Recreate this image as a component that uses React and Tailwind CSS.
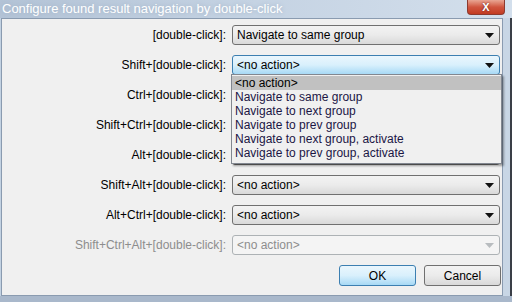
import React from "react";

const rows = [
    { label: "[double-click]:", value: "Navigate to same group" },
    { label: "Shift+[double-click]:", value: "<no action>", focused: true },
    { label: "Ctrl+[double-click]:", value: "<no action>", covered: true },
    { label: "Shift+Ctrl+[double-click]:", value: "<no action>", covered: true },
    { label: "Alt+[double-click]:", value: "<no action>", covered: true },
    { label: "Shift+Alt+[double-click]:", value: "<no action>" },
    { label: "Alt+Ctrl+[double-click]:", value: "<no action>" },
    { label: "Shift+Ctrl+Alt+[double-click]:", value: "<no action>", disabled: true },
];

const options = [
    "<no action>",
    "Navigate to same group",
    "Navigate to next group",
    "Navigate to prev group",
    "Navigate to next group, activate",
    "Navigate to prev group, activate",
];

function Arrow({ disabled }) {
    return (
        <svg width="9" height="5" viewBox="0 0 9 5" className="shrink-0">
            <path d="M0 0 H9 L4.5 5 Z" fill={disabled ? "#b8bcbf" : "#111"} />
        </svg>
    );
}

function Combo({ value, focused, disabled }) {
    let cls = "border-[#707070] bg-gradient-to-b from-[#f3f3f3] via-[#ebebeb] to-[#d9d9d9] text-black";
    if (focused) cls = "border-[#3c7fb1] bg-gradient-to-b from-[#eaf6fd] via-[#d9f0fc] to-[#a7d9f5] text-black";
    if (disabled) cls = "border-[#adb2b5] bg-[#f4f4f4] text-[#8d8d8d]";
    return (
        <div className={`w-[268px] h-[20px] flex items-center justify-between rounded-[3px] border pl-[4px] pr-[5px] ${cls}`}>
            <span>{value}</span>
            <Arrow disabled={disabled} />
        </div>
    );
}

function Button({ children, focused }) {
    const cls = focused
        ? "border-[#3c7fb1] from-[#eaf6fd] via-[#d9f0fc] to-[#a7d9f5]"
        : "border-[#707070] from-[#f3f3f3] via-[#ebebeb] to-[#d9d9d9]";
    return (
        <div className={`w-[77px] h-[21px] flex items-center justify-center rounded-[3px] border bg-gradient-to-b ${cls}`}>
            {children}
        </div>
    );
}

export default function App() {
    return (
        <div
            className="w-[512px] h-[302px] relative overflow-hidden bg-[#c3d2e2] text-[12px] leading-[14px]"
            style={{ fontFamily: '"Liberation Sans", Arial, sans-serif' }}
        >
            {/* title bar */}
            <div className="h-[18px] flex items-start bg-gradient-to-r from-[#b3c3d6] via-[#c5d3e3] to-[#d3dfec]">
                <span className="ml-[2px] mt-[1px] text-[13px] leading-[15px] text-white [text-shadow:0_0_4px_#9fb0c4]">
                    Configure found result navigation by double-click
                </span>
                <div className="ml-auto mr-[7px] w-[38px] h-[15px] flex items-center justify-center rounded-b-[4px] border border-t-0 border-[#8c3a2f] bg-gradient-to-b from-[#e8a593] via-[#d0553f] to-[#c23b22]">
                    <span className="text-white text-[11px] font-bold leading-none [text-shadow:0_0_2px_#5a1a10]">X</span>
                </div>
            </div>

            <div className="flex h-[278px]">
                {/* client area */}
                <div className="ml-[1px] w-[502px] h-[278px] border border-[#8a9bb0] bg-[#f0f0f0] relative">
                    <div className="flex flex-col gap-[10px] pt-[6px]">
                        {rows.map((r) => (
                            <div key={r.label} className="flex items-center">
                                <div className={`w-[224px] text-right ${r.disabled ? "text-[#8d8d8d]" : "text-black"}`}>
                                    {r.label}
                                </div>
                                <div className="ml-[6px]">
                                    {/* combos under the open list show no text */}
                                    <Combo value={r.covered ? "" : r.value} focused={r.focused} disabled={r.disabled} />
                                </div>
                            </div>
                        ))}
                        <div className="flex justify-end gap-[8px] pr-[1px]">
                            <Button focused>OK</Button>
                            <Button>Cancel</Button>
                        </div>
                    </div>

                    {/* open dropdown list */}
                    <div className="absolute left-[229px] top-[55px] w-[271px] h-[90px] border border-[#828790] bg-[#f0f0f0] shadow-[2px_2px_2px_rgba(0,0,0,0.35)] pt-[1px]">
                        {options.map((o, i) => (
                            <div
                                key={o}
                                className={`h-[14px] pl-[3px] ${i === 0 ? "bg-[#c1c1c1] text-black" : "text-[#1b1645]"}`}
                            >
                                {o}
                            </div>
                        ))}
                    </div>
                </div>
                {/* right frame + background window */}
                <div className="flex-1 flex">
                    <div className="flex-1 bg-[#c8d6e5]" />
                    <div className="w-[2px] bg-[#3a3f47]" />
                </div>
            </div>
            <div className="h-[6px] bg-[#a9b8cb]" />
        </div>
    );
}
